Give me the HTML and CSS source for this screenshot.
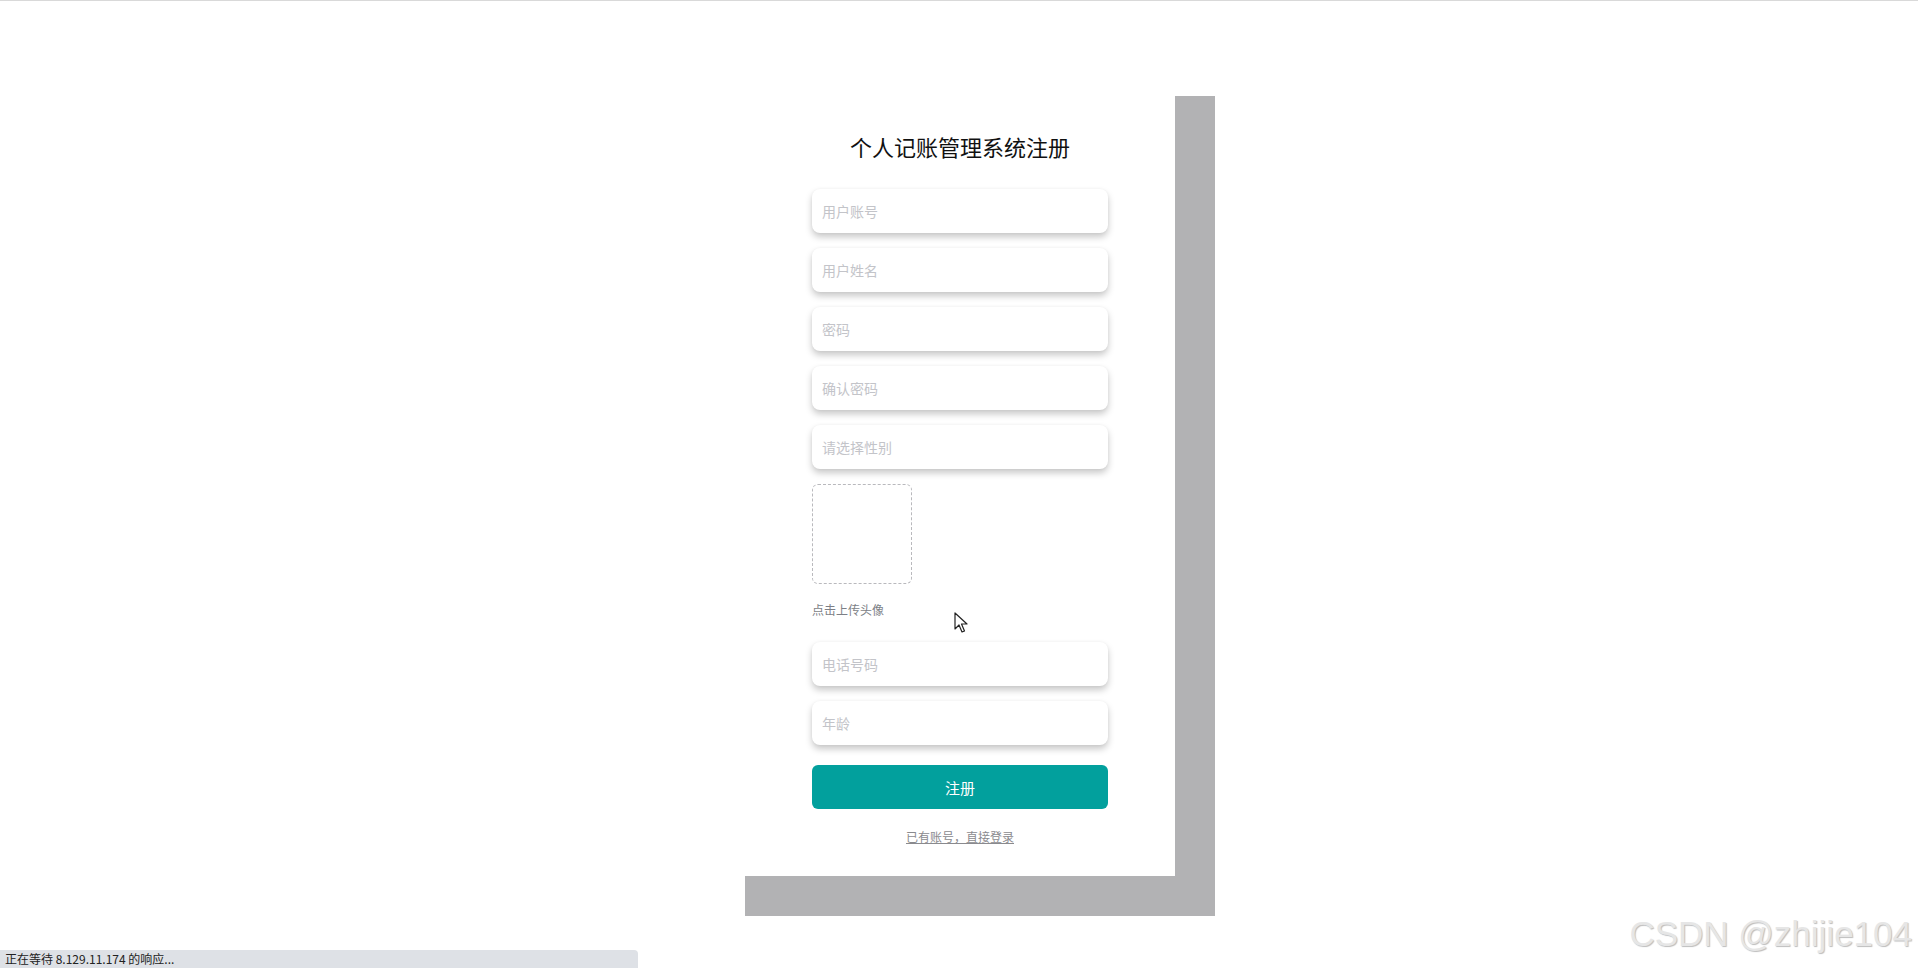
FILE: index.html
```html
<!DOCTYPE html>
<html lang="zh-CN">
<head>
    <meta charset="UTF-8">
    <meta name="viewport" content="width=device-width, initial-scale=1.0">
    <title>个人记账管理系统注册</title>
    <link rel="stylesheet" href="styles.css">
</head>
<body>
    <div class="topline"></div>
    <div class="page">
        <div class="card">
            <h2 class="title">个人记账管理系统注册</h2>
            <input class="ipt" type="text" placeholder="用户账号">
            <input class="ipt" type="text" placeholder="用户姓名">
            <input class="ipt" type="password" placeholder="密码">
            <input class="ipt" type="password" placeholder="确认密码">
            <input class="ipt" type="text" placeholder="请选择性别">
            <div class="upload"></div>
            <div class="upload-tip">点击上传头像</div>
            <input class="ipt phone" type="text" placeholder="电话号码">
            <input class="ipt" type="text" placeholder="年龄">
            <button class="btn">注册</button>
            <div class="links"><a href="#">已有账号，直接登录</a></div>
        </div>
    </div>
    <svg class="cursor" width="14" height="22" viewBox="0 0 14 22">
        <path d="M1 1 L1 17 L5 13 L8 20 L10.5 19 L7.5 12 L13 12 Z" fill="#fff" stroke="#222" stroke-width="1.2" stroke-linejoin="round"/>
    </svg>
    <div class="status">正在等待 8.129.11.174 的响应...</div>
    <div class="mark">CSDN @zhijie104</div>
</body>
</html>
```
FILE: styles.css
```css
*{
    box-sizing: border-box;
}
body{
    margin: 0;
    background: #fff;
    font-family: "Noto Sans CJK SC", "Noto Sans", sans-serif;
    height: 968px;
    overflow: hidden;
}
.topline{
    height: 1px;
    background-color: #d9d9d9;
}
.page{
    display: flex;
    justify-content: center;
    padding-top: 95px;
    padding-left: 2px;
}
.card{
    display: flex;
    flex-direction: column;
    width: 430px;
    height: 780px;
    padding: 35px 67px 0;
    background-color: #fff;
    /* 右下角的灰色阴影 */
    box-shadow: 20px 20px 0 20px #b2b2b4;
}
.title{
    margin: 0 0 28px;
    font-size: 22px;
    line-height: 30px;
    font-weight: normal;
    text-align: center;
    color: #111;
}
.ipt{
    width: 296px;
    height: 44px;
    margin-bottom: 15px;
    padding: 0 10px;
    border: none;
    border-radius: 8px;
    outline: none;
    font-family: inherit;
    font-size: 14px;
    background: #fff;
    box-shadow: 0 4px 7px rgba(0, 0, 0, 0.22), 0 0 3px rgba(0, 0, 0, 0.04);
}
.ipt::placeholder{
    color: #c3c4c9;
}
.upload{
    width: 100px;
    height: 100px;
    border: 1px dashed #b9b9bd;
    border-radius: 6px;
}
.upload-tip{
    margin-top: 16px;
    font-size: 12px;
    line-height: 20px;
    color: #7d7f86;
}
.phone{
    margin-top: 22px;
}
.btn{
    width: 296px;
    height: 44px;
    margin-top: 5px;
    border: none;
    border-radius: 6px;
    background-color: #02a09d;
    color: #fff;
    font-family: inherit;
    font-size: 15px;
}
.links{
    margin-top: 18px;
    text-align: center;
    font-size: 12px;
    line-height: 20px;
}
.links a{
    color: #8a8a8e;
}
.cursor{
    position: absolute;
    left: 954px;
    top: 612px;
}
.status{
    position: absolute;
    left: 0;
    bottom: 0;
    width: 638px;
    height: 18px;
    padding-left: 5px;
    background-color: #dee1e6;
    border-top-right-radius: 4px;
    font-size: 12px;
    line-height: 18px;
    color: #222;
}
.mark{
    position: absolute;
    right: 6px;
    bottom: 14px;
    font-family: "Liberation Sans", Arial, sans-serif;
    font-size: 35px;
    color: #e6e6e6;
    text-shadow: 1px 1px 1px #bdbdbd;
}
```
